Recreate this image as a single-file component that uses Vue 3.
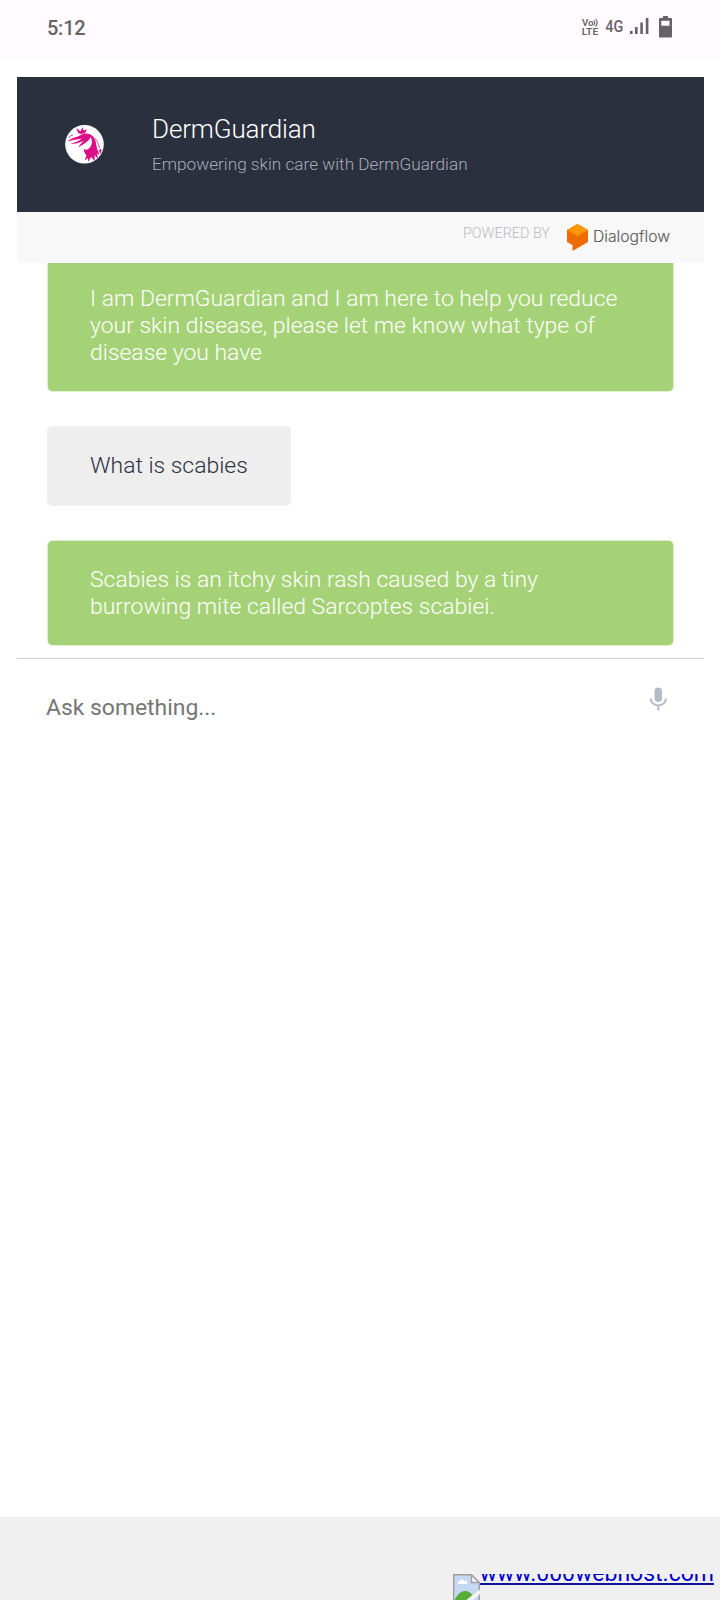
<script setup>
const messages = [
  { from: 'bot', lines: ['I am DermGuardian and I am here to help you reduce', 'your skin disease, please let me know what type of', 'disease you have'] },
  { from: 'user', lines: ['What is scabies'] },
  { from: 'bot', lines: ['Scabies is an itchy skin rash caused by a tiny', 'burrowing mite called Sarcoptes scabiei.'] },
]
</script>

<template>
  <div class="screen">
    <div class="status">
      <span class="time">5:12</span>
      <svg class="indicators" width="92" height="26" viewBox="580 14 92 26">
        <g fill="#666266">
          <text x="582" y="25.700" font-size="9" font-weight="600" textLength="11.500" lengthAdjust="spacingAndGlyphs">Vo</text>
          <text x="581.700" y="35" font-size="9.800" font-weight="600" textLength="16.500" lengthAdjust="spacingAndGlyphs">LTE</text>
          <text x="605.300" y="32" font-size="17" font-weight="500" textLength="18" lengthAdjust="spacingAndGlyphs">4G</text>
          <path d="M630 31h2.600v3H630zM635 27h2.600v7H635zM640.300 22.500h2.600V34h-2.600zM645.800 18h2.600v16h-2.600z" />
          <path fill-rule="evenodd" d="M663 16h5v2h3q1 0 1 1v17.500q0 1-1 1h-11q-1 0-1-1V19q0-1 1-1h3zM661.300 20.700v5h8.200v-5z" />
        </g>
        <path d="M593.600 20.500q2.300 2.400 0 5M595.500 19q3.300 3.600 0 7.500" fill="none" stroke="#666266" stroke-width="1.100" />
      </svg>
    </div>

    <div class="widget">
      <header class="head">
        <svg class="avatar" width="40" height="40" viewBox="0 0 40 40">
          <circle cx="20.500" cy="20.300" r="19.300" fill="#fff" />
          <g fill="#dc0d86">
            <path d="M3.500 17.500C8 13 13 13.500 17 11C20 9 25 9 28.500 12C31.500 14.500 32 19 32.500 22C33 26 35 28 35.500 31L33 29.500L34 35L30.500 31L31 37L27 33L24 38L24 34L20.500 36.500L22.500 31.500C20.500 29 19.500 27 20 25C22 26.500 25 25.500 27 22C28.500 19 28 15 26.500 13C25.500 17 20 19.500 14.500 23.500C15.500 20.500 18 18.500 20 16.500C16 19 11 20 6.500 20C11 18.500 15 17 18 14.500C13 16 8 15.500 3.500 17.500Z" />
            <path d="M12.500 4L16.500 7.500L18.500 3L19.500 6.500L23 5.500L21 9L17 10L14 9Z" />
            <path d="M36 25L37.500 25L37 30L35 27Z" />
          </g>
          <path d="M5 14Q6 11 9 11M31 14Q35 19 35.500 24" fill="none" stroke="#dc0d86" stroke-width=".7" />
        </svg>
        <div class="titles">
          <h1>DermGuardian</h1>
          <p>Empowering skin care with DermGuardian</p>
        </div>
      </header>

      <div class="powered">
        <span class="by">POWERED BY</span>
        <svg class="dialogflow" width="108" height="30" viewBox="565 222 108 30">
          <path d="M567 230L577.500 224L588 230V242L572.500 251V245L567 242Z" fill="#ef6c00" />
          <path d="M567 230L577.500 224L588 230L577.500 236Z" fill="#ff9800" />
          <text x="593" y="242" font-size="16" fill="#606060" stroke="#606060" stroke-width=".15" textLength="77" lengthAdjust="spacingAndGlyphs">Dialogflow</text>
        </svg>
      </div>

      <main class="chat">
        <div v-for="(m, i) in messages" :key="i" class="bubble" :class="m.from">
          <div v-for="line in m.lines" :key="line">{{ line }}</div>
        </div>
      </main>

      <div class="ask">
        <span>Ask something...</span>
        <svg width="18" height="24" viewBox="0 0 18 24">
          <rect x="4.500" y="0.500" width="7.500" height="14.500" rx="3.750" fill="#b5bbc7" />
          <path d="M.7 11.500a7.600 6.900 0 0 0 15.200 0M8.300 18.500V23.500" fill="none" stroke="#b5bbc7" stroke-width="2" />
        </svg>
      </div>
    </div>

    <footer class="foot">
      <a class="host">
        <svg width="27" height="27" viewBox="0 0 27 27">
          <path d="M.7 27V.7H18.500L26.300 8.500V27Z" fill="#c6d8f5" stroke="#a0a0a0" stroke-width="1.500" />
          <path d="M5 10q-1-3 2-3q2-4 4 0q4 0 3 3z" fill="#fff" />
          <path d="M1.500 26q5-10 12-9q4 1 6 4l-6 6H1.500z" fill="#58ac38" />
          <path d="M12 27L27 15.500V20L19 27Z" fill="#f4f6f3" />
          <path d="M18.500 1V8.500H26Z" fill="#fff" stroke="#a0a0a0" stroke-width="1.500" />
        </svg>
        <span class="clip"><span class="url">www.000webhost.com</span></span>
      </a>
    </footer>
  </div>
</template>

<style>
body { margin: 0; background: #fff; }
</style>

<style scoped>
.screen {
  width: 720px;
  height: 1600px;
  display: flex;
  flex-direction: column;
  background: #fff;
  overflow: hidden;
  font-family: Roboto, "Liberation Sans", sans-serif;
}
.status {
  height: 60px;
  box-sizing: border-box;
  padding: 14px 48px 0 47px;
  display: flex;
  justify-content: space-between;
  background: #fffbff;
}
.time { font-size: 20px; line-height: 28px; font-weight: 500; letter-spacing: -.25px; color: #666266; }
.widget { margin: 17px 16px 0 17px; }
.head {
  height: 135px;
  box-sizing: border-box;
  padding-left: 47px;
  display: flex;
  background: #2b303e;
}
.avatar { margin-top: 47px; }
.titles { margin: 37px 0 0 48px; white-space: nowrap; }
h1 { margin: 0; font-size: 26px; line-height: 30px; font-weight: 300; letter-spacing: -.13px; color: #fff; }
p { margin: 10px 0 0; font-size: 17.200px; line-height: 20px; font-weight: 300; color: #a8abb8; }
.powered {
  height: 51px;
  display: flex;
  justify-content: flex-end;
  background: #f8f8f8;
}
.by { margin: 14px 15px 0 0; font-size: 14.400px; line-height: 16px; font-weight: 300; color: #b7bbc4; }
.dialogflow { margin: 10px 31px 0 0; font-family: Inter, Roboto, sans-serif; font-weight: 300; }
.chat {
  height: 396px;
  box-sizing: border-box;
  padding: 0 30px 12px;
  display: flex;
  flex-direction: column;
  justify-content: flex-end;
  align-items: flex-start;
  gap: 34px;
  overflow: hidden;
  border-bottom: 1px solid #cfcfcf;
}
.bubble {
  flex: none;
  box-sizing: border-box;
  padding: 25px 42px;
  border: 1px solid;
  border-radius: 5px;
  font-size: 22.930px;
  line-height: 27px;
  font-weight: 300;
  white-space: nowrap;
}
.bot { width: 627px; color: #fff; background: #a5d276; background-clip: padding-box; border-color: #e0f0cf; }
.user { width: 244px; padding-bottom: 26px; color: #2b303e; background: #eee; border-color: #eee; }
.ask {
  display: flex;
  justify-content: space-between;
  padding: 28px 36px 0 29px;
}
.ask span { margin-top: 7px; font-size: 22.900px; line-height: 27px; color: #757575; }
.foot {
  margin-top: auto;
  height: 83px;
  box-sizing: border-box;
  padding: 57px 6px 0 0;
  display: flex;
  justify-content: flex-end;
  background: #f0f0f0;
}
.host { display: flex; }
.clip { height: 16px; overflow: hidden; }
.url {
  display: block;
  margin-top: -14px;
  font-size: 23px;
  line-height: 28px;
  color: #00c;
  text-decoration: underline #1010a0 2px;
  text-underline-offset: 2px;
  text-decoration-skip-ink: none;
}
</style>
